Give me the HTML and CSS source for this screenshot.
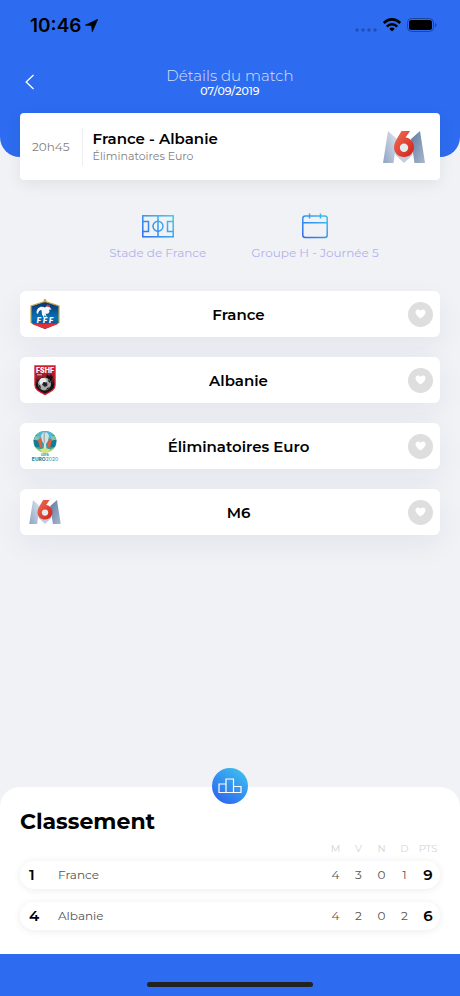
FILE: index.html
```
<!DOCTYPE html>
<html lang="fr">
<head>
  <meta charset="UTF-8">
  <meta name="viewport" content="width=device-width, initial-scale=1.0">
  <title>Détails du match</title>
  <link rel="stylesheet" href="styles.css">
</head>
<body>
  <!-- Shared gradients and the M6 logo -->
  <svg class="defs" width="0" height="0" aria-hidden="true">
    <defs>
      <linearGradient id="stroke-blue" gradientUnits="userSpaceOnUse" x1="4" y1="26" x2="28" y2="2">
        <stop offset="0" stop-color="#2f6df0"/>
        <stop offset="1" stop-color="#3fc8ee"/>
      </linearGradient>
      <linearGradient id="m6-left" x1="1" y1="0" x2="0" y2="1">
        <stop offset="0" stop-color="#dfe6f0"/>
        <stop offset="1" stop-color="#8fa3c2"/>
      </linearGradient>
      <linearGradient id="m6-right" x1="0" y1="0" x2="1" y2="1">
        <stop offset="0" stop-color="#5f7ba3"/>
        <stop offset="1" stop-color="#a9b8ce"/>
      </linearGradient>
      <linearGradient id="m6-six" x1="0" y1="0" x2="1" y2="1">
        <stop offset="0" stop-color="#f0705a"/>
        <stop offset="1" stop-color="#d21f14"/>
      </linearGradient>
      <symbol id="m6" viewBox="0 0 42 32">
        <path d="M5 0 L14 8 L10.500 32 H0 Z" fill="url(#m6-left)"/>
        <path d="M37 0 L28 8 L31.500 32 H42 Z" fill="url(#m6-right)"/>
        <path d="M12 14 H30 L29.500 24 L21 32 L12.500 24 Z" fill="#c3cddd"/>
        <path fill="url(#m6-six)" d="M18.500 0 H27 L22.500 6.500 C27.500 7 31 11 31 16 C31 22 26.500 26 21 26 C15.500 26 11 22 11 16.500 C11 13 12.500 10 14 7.500 Z"/>
        <circle cx="21" cy="16.800" r="4.200" fill="#e6ebf2"/>
      </symbol>
      <symbol id="heart" viewBox="0 0 12 11">
        <path d="M6 10.500 C2.500 7.800 .5 6 .5 3.500 C.5 1.800 1.700 .6 3.300 .6 C4.400 .6 5.400 1.200 6 2.100 C6.600 1.200 7.600 .6 8.700 .6 C10.300 .6 11.500 1.800 11.500 3.500 C11.500 6 9.500 7.800 6 10.500 Z" fill="#fff"/>
      </symbol>
    </defs>
  </svg>

  <div class="app">
    <header class="header">
      <div class="status">
        <div class="status-time">
          <span>10:46</span>
          <svg width="13" height="13" viewBox="0 0 13 13"><path d="M12.800 .2 L.2 6.200 L6.500 6.500 L7.300 12.800 Z" stroke="#000" stroke-width=".6" stroke-linejoin="round"/></svg>
        </div>
        <div class="status-icons">
          <svg width="22" height="4" viewBox="0 0 22 4" fill="#1d4fb8">
            <circle cx="2" cy="2" r="1.700"/><circle cx="8" cy="2" r="1.700"/><circle cx="14" cy="2" r="1.700"/><circle cx="20" cy="2" r="1.700"/>
          </svg>
          <svg width="18" height="14" viewBox="0 0 18 14" fill="none" stroke="#000" stroke-width="2.600">
            <path d="M.8 5 C5.500 .2 12.500 .2 17.200 5"/>
            <path d="M3.800 8.600 C6.700 5.500 11.300 5.500 14.200 8.600"/>
            <path d="M6.300 10.700 Q9 8.300 11.700 10.700 L9 13.500 Z" fill="#000" stroke="none"/>
          </svg>
          <svg width="30" height="14" viewBox="0 0 30 14">
            <rect x=".5" y=".5" width="26" height="13" rx="4" fill="none" stroke="#1a469f"/>
            <rect x="2" y="2" width="23" height="10" rx="2.500"/>
            <path d="M28 5 Q29.500 5.500 29.500 7 Q29.500 8.500 28 9 Z" fill="#1a469f"/>
          </svg>
        </div>
      </div>
      <div class="nav">
        <button class="back" aria-label="Retour">
          <svg width="10" height="16" viewBox="0 0 10 16"><path d="M8.500 1 L1.200 8 L8.500 15" fill="none" stroke="#fff" stroke-width="1.300"/></svg>
        </button>
        <div class="nav-title">
          <h1>Détails du match</h1>
          <p>07/09/2019</p>
        </div>
      </div>
    </header>

    <main class="content">
      <section class="match">
        <p class="match-time">20h45</p>
        <div class="match-info">
          <h2>France - Albanie</h2>
          <p>Éliminatoires Euro</p>
        </div>
        <svg class="match-channel" width="42" height="32"><use href="#m6"/></svg>
      </section>

      <section class="places">
        <div class="place">
          <svg width="32" height="26" viewBox="0 0 32 26" fill="none" stroke="url(#stroke-blue)" stroke-width="1.500">
            <rect x=".8" y="2.800" width="30.400" height="21"/>
            <path d="M16 2.800 V23.800"/>
            <circle cx="16" cy="13.300" r="5"/>
            <path d="M.8 8.500 H6.500 V18.500 H.8 M31.200 8.500 H25.500 V18.500 H31.200"/>
          </svg>
          <p>Stade de France</p>
        </div>
        <div class="place">
          <svg width="26" height="26" viewBox="0 0 26 26" fill="none" stroke="url(#stroke-blue)" stroke-width="1.500">
            <rect x=".8" y="3" width="24.400" height="21.500" rx="2.500"/>
            <path d="M.8 9.800 H25.200 M7.500 .5 V5.500 M18.500 .5 V5.500"/>
          </svg>
          <p>Groupe H - Journée 5</p>
        </div>
      </section>

      <ul class="favorites">
        <li class="favorite">
          <svg class="logo" width="32" height="32" viewBox="0 0 32 32">
            <defs>
              <linearGradient id="fff-blue" x1="0" y1="0" x2="0" y2="1">
                <stop offset="0" stop-color="#0b2f6b"/><stop offset=".6" stop-color="#0873b8"/><stop offset="1" stop-color="#0b3a7c"/>
              </linearGradient>
            </defs>
            <path d="M2 8 L16 3.500 L30 8 V25 L16 31 L2 25 Z" fill="url(#fff-blue)"/>
            <path d="M2.500 25.500 H29.500 L28 26.500 L16 31 L4 26.500 Z" fill="#e0303a"/>
            <path d="M2 25 V8 L16 3.500 L30 8 V25" fill="none" stroke="#c3a74c" stroke-width="1.200"/>
            <path d="M16 .5 L17.600 2.200 L16 4.500 L14.400 2.200 Z" fill="#c3a74c"/>
            <path d="M7.500 15 C7.500 9.500 12 7.500 16 9.500 L18 8 L20.500 9 L22.500 11.500 L20 11.800 C21.500 14.500 19 16.500 16.500 15.500 L18 19.500 L15.500 17 L15 20 L13 16.500 L12.500 12 C10.500 12 9.500 13.500 9 16 Z" fill="#f4f7fb"/>
            <path d="M17.500 8.500 L18 6.300 L19.500 7 L20.800 6.800 L20.500 9 Z" fill="#e0303a"/>
            <text x="17" y="25" class="fff-text">FFF</text>
          </svg>
          <span class="favorite-name">France</span>
          <button class="like" aria-label="Suivre France"><svg width="11" height="10"><use href="#heart"/></svg></button>
        </li>
        <li class="favorite">
          <svg class="logo" width="32" height="32" viewBox="0 0 32 32">
            <defs>
              <linearGradient id="fshf-red" x1="0" y1="0" x2="0" y2="1">
                <stop offset="0" stop-color="#c9202c"/><stop offset=".4" stop-color="#96202a"/><stop offset=".65" stop-color="#161214"/><stop offset="1" stop-color="#2a1416"/>
              </linearGradient>
            </defs>
            <path d="M6 2 H26 V21 C26 26 21 28 16 30.500 C11 28 6 26 6 21 Z" fill="url(#fshf-red)" stroke="#d4202f" stroke-width="1.400"/>
            <text x="16" y="8.500" class="fshf-text">FSHF</text>
            <path d="M8 10.800 H13" stroke="#f1b9bc" stroke-width="1"/>
            <path d="M8 17 L14 13 L17 14 L18 10 L20 12 L22 10.500 L24 13 L22 17 Z" fill="#171012"/>
            <circle cx="15.500" cy="20" r="6.500" fill="#a9abad"/>
            <circle cx="14" cy="17.500" r="3.500" fill="#e9eaeb"/>
            <path d="M14.500 18 L18 18.500 L18.500 21.500 L16 23 L13 20.500 Z M9.300 20 L11.500 22 L12 25 A6 6 0 0 1 9.300 20 Z M19 15 L21 17 L21.800 19.500 L19.500 17.800 Z M16.500 26 L18.500 23.800 L21 23 A6 6 0 0 1 16.500 26 Z" fill="#222"/>
          </svg>
          <span class="favorite-name">Albanie</span>
          <button class="like" aria-label="Suivre Albanie"><svg width="11" height="10"><use href="#heart"/></svg></button>
        </li>
        <li class="favorite">
          <svg class="logo" width="32" height="32" viewBox="0 0 32 32">
            <ellipse cx="16" cy="11.500" rx="11.500" ry="10.500" fill="#2c9dac"/>
            <path d="M8 4 C10 2 14 1 16 1 L14 8 L9 10 Z M24 4 C22 2 18 1 16 1 L18 8 L23 10 Z" fill="#51b8d0"/>
            <path d="M4.500 10 L9 10 L12 17 L6 17 Z M27.500 10 L23 10 L20 17 L26 17 Z" fill="#157a98"/>
            <path d="M6.500 6 L10 6.500 L9 10.500 L4.800 9.500 Z M25.500 6 L22 6.500 L23 10.500 L27.200 9.500 Z" fill="#8dc5a2"/>
            <path d="M9 10 L12 8 L13.500 16 L11 18 Z M23 10 L20 8 L18.500 16 L21 18 Z" fill="#e0603a"/>
            <path d="M14 2.500 H18 L20 5.500 L19 11 L17 14 L17.500 19 H14.500 L15 14 L13 11 L12 5.500 Z" fill="#d8dfe2"/>
            <path d="M14.500 3.500 V11 L16 14 V2.500 Z" fill="#a7b3b8"/>
            <path d="M6.500 17.500 Q11 20 16 19.500 Q21 20 25.500 17.500 Q22 22.500 16 22.800 Q10 22.500 6.500 17.500 Z" fill="#a4cb57"/>
            <path d="M11 19.500 Q16 17 21 19.500 L19 22.500 H13 Z" fill="#d9e37a"/>
            <text x="16" y="25.700" class="uefa-text">UEFA</text>
            <text x="16" y="31" class="euro-text">EURO<tspan class="euro-year">2020</tspan></text>
          </svg>
          <span class="favorite-name">Éliminatoires Euro</span>
          <button class="like" aria-label="Suivre Éliminatoires Euro"><svg width="11" height="10"><use href="#heart"/></svg></button>
        </li>
        <li class="favorite">
          <svg class="logo" width="32" height="24"><use href="#m6"/></svg>
          <span class="favorite-name">M6</span>
          <button class="like" aria-label="Suivre M6"><svg width="11" height="10"><use href="#heart"/></svg></button>
        </li>
      </ul>
    </main>

    <section class="standings">
      <div class="podium">
        <svg width="24" height="16" viewBox="0 0 24 16" fill="none" stroke="#fff" stroke-width="1.200">
          <path d="M1 14.500 V6 H8 V1 H15.500 V14.500 Z M8 6 V14.500 M15.500 8.500 H23 V14.500 H15.500"/>
        </svg>
      </div>
      <h2>Classement</h2>
      <table class="ranking">
        <thead>
          <tr>
            <th></th><th></th>
            <th>M</th><th>V</th><th>N</th><th>D</th><th>PTS</th>
          </tr>
        </thead>
        <tbody>
          <tr>
            <td class="rank">1</td><td class="team">France</td>
            <td>4</td><td>3</td><td>0</td><td>1</td><td class="points">9</td>
          </tr>
          <tr>
            <td class="rank">4</td><td class="team">Albanie</td>
            <td>4</td><td>2</td><td>0</td><td>2</td><td class="points">6</td>
          </tr>
        </tbody>
      </table>
    </section>

    <footer class="footer">
      <div class="home-bar"></div>
    </footer>
  </div>
</body>
</html>
```
FILE: styles.css
```
*, *:before, *:after{
  padding: 0;
  margin: 0;
  box-sizing: border-box;
}
body{
  background-color: #f0f2f6;
  font-family: Montserrat, Inter, sans-serif;
  color: #000000;
}
button{
  border: none;
  background: none;
  cursor: pointer;
}
svg{
  display: block;
  flex-shrink: 0;
}
.defs{
  position: absolute;
}
.app{
  min-height: 100vh;
  display: flex;
  flex-direction: column;
}

/* Header */
.header{
  background-color: #2d6cf0;
  border-radius: 0 0 20px 20px;
  padding-bottom: 60px;
}
.status{
  height: 50px;
  padding: 0 23px 0 30px;
  display: flex;
  justify-content: space-between;
  align-items: center;
}
.status-time{
  display: flex;
  align-items: center;
  gap: 4px;
  font-family: Inter, sans-serif;
  font-size: 19px;
  font-weight: 600;
}
.status-icons{
  display: flex;
  align-items: center;
  gap: 6px;
}
.status-icons svg:first-child{
  margin-top: 10px;
}
.nav{
  display: grid;
  grid-template-columns: 40px 1fr 40px;
  align-items: center;
  padding: 17px 10px 0;
}
.back{
  height: 30px;
  display: flex;
  align-items: center;
  justify-content: center;
}
.nav-title{
  text-align: center;
  color: #ffffff;
}
.nav-title h1{
  font-size: 15px;
  font-weight: 300;
  line-height: 18px;
  opacity: 0.8;
}
.nav-title p{
  font-size: 11px;
  font-weight: 500;
  line-height: 12px;
}

/* Match */
.content{
  flex: 1;
  padding: 0 20px 40px;
}
.match{
  margin-top: -44px;
  height: 67px;
  display: flex;
  align-items: center;
  padding: 0 15px 0 12px;
  background-color: #ffffff;
  border-radius: 4px;
  box-shadow: 0 4px 16px rgba(0,0,0,0.07);
}
.match-time{
  font-size: 12px;
  color: #808080;
  padding-right: 12px;
  line-height: 38px;
  border-right: 1px solid #eeeeee;
}
.match-info{
  flex: 1;
  padding-left: 10px;
}
.match-info h2{
  font-size: 15px;
  font-weight: 600;
  line-height: 18px;
}
.match-info p{
  font-size: 11px;
  line-height: 16px;
  color: #808080;
}
.places{
  display: flex;
  justify-content: center;
  gap: 45px;
  padding: 33px 0 29px;
  margin-left: 28px;
}
.place{
  display: flex;
  flex-direction: column;
  align-items: center;
  gap: 5px;
  font-size: 12px;
  line-height: 18px;
  color: #b3b1ec;
}

/* Favorites */
.favorites{
  list-style: none;
  display: flex;
  flex-direction: column;
  gap: 20px;
}
.favorite{
  height: 46px;
  display: flex;
  align-items: center;
  padding: 0 7px 0 9px;
  background-color: #ffffff;
  border-radius: 6px;
  box-shadow: 0 10px 30px rgba(40,40,70,0.06);
}
.favorite-name{
  flex: 1;
  padding-left: 8px;
  text-align: center;
  font-size: 15px;
  font-weight: 600;
}
.like{
  width: 25px;
  height: 25px;
  border-radius: 50%;
  background-color: #dedede;
  display: flex;
  align-items: center;
  justify-content: center;
}
.fff-text, .fshf-text, .uefa-text, .euro-text{
  fill: #ffffff;
  font-family: Inter, sans-serif;
  font-weight: 800;
  text-anchor: middle;
}
.fff-text{
  font-size: 7px;
  font-weight: 900;
  font-style: italic;
  letter-spacing: 2px;
}
.fshf-text{
  font-size: 7px;
}
.uefa-text{
  font-size: 3px;
  fill: #2c9dac;
}
.euro-text{
  font-size: 5px;
  fill: #1b8ba0;
}
.euro-year{
  font-weight: 400;
}

/* Standings */
.standings{
  position: relative;
  background-color: #ffffff;
  border-radius: 20px 20px 0 0;
  padding: 20px 20px 24px;
}
.podium{
  position: absolute;
  top: -19px;
  left: 50%;
  width: 36px;
  height: 36px;
  margin-left: -18px;
  border-radius: 50%;
  background: linear-gradient(215deg, #3fc8ee, #2d6cf0 85%);
  display: flex;
  align-items: center;
  justify-content: center;
}
.standings h2{
  font-size: 22px;
  font-weight: 700;
  line-height: 30px;
}
.ranking, .ranking thead{
  display: block;
}
.ranking tbody{
  display: flex;
  flex-direction: column;
  gap: 13px;
}
.ranking tr{
  display: grid;
  grid-template-columns: 38px 1fr repeat(4, 23px) 24px;
  align-items: center;
}
.ranking th{
  font-size: 10px;
  font-weight: 400;
  line-height: 24px;
  color: #d5d5d5;
}
.ranking tbody tr{
  height: 28px;
  border-radius: 14px;
  background-color: #ffffff;
  box-shadow: 0 1px 8px rgba(0,0,0,0.08);
}
.ranking td{
  font-size: 12px;
  line-height: 16px;
  text-align: center;
  color: #555555;
}
.ranking .rank{
  padding-left: 9px;
  text-align: left;
}
.ranking .team{
  text-align: left;
}
.ranking .rank, .ranking .points{
  font-size: 15px;
  font-weight: 600;
  color: #000000;
}

/* Footer */
.footer{
  height: 42px;
  background-color: #2d6cf0;
  display: flex;
  justify-content: center;
  align-items: flex-end;
  padding-bottom: 9px;
}
.home-bar{
  width: 36%;
  height: 5px;
  border-radius: 3px;
  background-color: #222222;
}
```
